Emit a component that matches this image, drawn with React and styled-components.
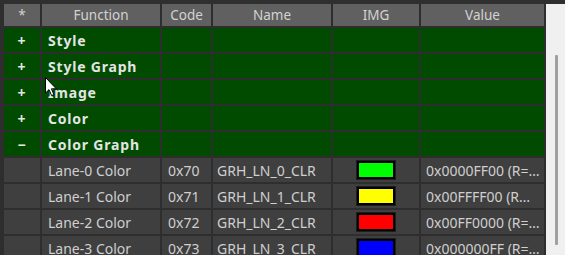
import React from 'react';
import styled, { createGlobalStyle } from 'styled-components';

const GlobalStyle = createGlobalStyle`
  html, body {
    margin: 0;
    padding: 0;
    background: #2f2f2f;
    overflow: hidden;
  }
`;

const columns = [
  { key: 'star', label: '*', width: 36 },
  { key: 'func', label: 'Function', width: 118 },
  { key: 'code', label: 'Code', width: 49 },
  { key: 'name', label: 'Name', width: 118 },
  { key: 'img', label: 'IMG', width: 86 },
  { key: 'value', label: 'Value', width: 123 },
];

const groups = [
  { sign: '+', label: 'Style' },
  { sign: '+', label: 'Style Graph' },
  { sign: '+', label: 'Image' },
  { sign: '+', label: 'Color' },
  { sign: '−', label: 'Color Graph' },
];

// value column shows the text as the grid clips it
const lanes = [
  { func: 'Lane-0 Color', code: '0x70', name: 'GRH_LN_0_CLR', color: '#00ff00', value: '0x0000FF00 (R=…' },
  { func: 'Lane-1 Color', code: '0x71', name: 'GRH_LN_1_CLR', color: '#ffff00', value: '0x00FFFF00 (R…' },
  { func: 'Lane-2 Color', code: '0x72', name: 'GRH_LN_2_CLR', color: '#ff0000', value: '0x00FF0000 (R=…' },
  { func: 'Lane-3 Color', code: '0x73', name: 'GRH_LN_3_CLR', color: '#0000ff', value: '0x000000FF (R=…' },
];

export default function App() {
  return (
    <>
      <GlobalStyle />
      <Window>
        <Grid>
          {columns.map((c) => (
            <HeadCell key={c.key}>{c.label}</HeadCell>
          ))}
          {groups.map((g) => (
            <React.Fragment key={g.label}>
              <GroupCell $center>{g.sign}</GroupCell>
              <GroupCell>{g.label}</GroupCell>
              <GroupCell />
              <GroupCell />
              <GroupCell />
              <GroupCell />
            </React.Fragment>
          ))}
          {lanes.map((l) => (
            <React.Fragment key={l.code}>
              <DataCell />
              <DataCell>{l.func}</DataCell>
              <DataCell>{l.code}</DataCell>
              <DataCell $pad={4}>{l.name}</DataCell>
              <DataCell $center>
                <Swatch style={{ background: l.color }} />
              </DataCell>
              <DataCell $pad={5}>{l.value}</DataCell>
            </React.Fragment>
          ))}
        </Grid>
        <ScrollBar>
          <Thumb />
        </ScrollBar>
        <Cursor width="13" height="20" viewBox="0 0 13 20">
          <path
            d="M0.5 0.5 L0.5 16 L4 12.6 L6.6 18.6 L8.9 17.6 L6.4 11.8 L11.3 11.8 Z"
            fill="#fff"
            stroke="#000"
            strokeWidth="1"
          />
        </Cursor>
      </Window>
    </>
  );
}

const Window = styled.div`
  position: relative;
  display: flex;
  width: 565px;
  height: 255px;
  padding-top: 4px;
  box-sizing: border-box;
  background: #2f2f2f;
  overflow: hidden;
  font-family: 'Noto Sans', 'Noto Sans CJK JP', sans-serif;
  font-size: 13px;
`;

const Grid = styled.div`
  display: grid;
  grid-template-columns: ${columns.map((c) => `${c.width}px`).join(' ')};
  grid-auto-rows: 24px;
  grid-template-rows: 22px;
  gap: 2px;
  padding: 0 2px 0 4px;
  align-content: start;
  background: #2e2e2e;
`;

const Cell = styled.div`
  display: flex;
  align-items: center;
  justify-content: ${(p) => (p.$center ? 'center' : 'flex-start')};
  padding: 0 ${(p) => (p.$center ? 0 : p.$pad ?? 6)}px;
  white-space: nowrap;
  overflow: hidden;
  min-width: 0;
`;

const HeadCell = styled(Cell)`
  justify-content: center;
  padding: 0;
  background: #606060;
  color: #d2d2d2;
  font-size: 13.5px;
`;

const GroupCell = styled(Cell)`
  background: #004b00;
  color: #e4e4e4;
  font-weight: 700;
  font-size: 14px;
  letter-spacing: 0.8px;
`;

const DataCell = styled(Cell)`
  background: #3f3f3f;
  color: #cfcfcf;
  font-size: 14px;
`;

const Swatch = styled.div`
  width: 34px;
  height: 14px;
  border: 2px solid #000;
  box-shadow: 0 0 0 1px #1e1e1e;
`;

const ScrollBar = styled.div`
  width: 19px;
  flex-shrink: 0;
  display: flex;
  justify-content: center;
  padding-top: 51px;
  padding-left: 2px;
  box-sizing: border-box;
  background: #f0f0f0;
`;

const Thumb = styled.div`
  width: 3px;
  height: 190px;
  border-radius: 1px;
  background: #a0a0a0;
`;

const Cursor = styled.svg`
  position: absolute;
  left: 45px;
  top: 77px;
`;
